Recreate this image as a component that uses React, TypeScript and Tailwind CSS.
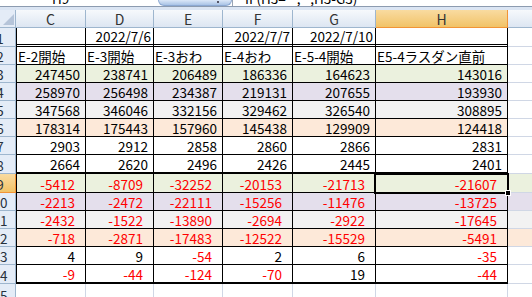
import React from "react";

type Row = {
  n: number;
  h: string;
  bg: string;
  cells: string[];
  kind: "date" | "label" | "num" | "diff" | "empty";
  bottom?: "double" | "thick";
  fillI?: boolean;
  selected?: boolean;
};

// column widths (incl. borders): C has its own left border
const colW = ["w-[70px]", "w-[68px]", "w-[69px]", "w-[70px]", "w-[83px]", "w-[132px]"];
const colNames = ["C", "D", "E", "F", "G", "H"];

const rows: Row[] = [
  { n: 1, h: "h-[19px]", bg: "bg-white", kind: "date", bottom: "double", cells: ["", "2022/7/6", "", "2022/7/7", "2022/7/10", ""] },
  { n: 2, h: "h-[18px]", bg: "bg-white", kind: "label", cells: ["E-2開始", "E-3開始", "E-3おわ", "E-4おわ", "E-5-4開始", "E5-4ラスダン直前"] },
  { n: 3, h: "h-[18px]", bg: "bg-[#ebf1de]", kind: "num", cells: ["247450", "238741", "206489", "186336", "164623", "143016"] },
  { n: 4, h: "h-[18px]", bg: "bg-[#e4dfec]", kind: "num", cells: ["258970", "256498", "234387", "219131", "207655", "193930"] },
  { n: 5, h: "h-[18px]", bg: "bg-[#f2f2f2]", kind: "num", cells: ["347568", "346046", "332156", "329462", "326540", "308895"] },
  { n: 6, h: "h-[18px]", bg: "bg-[#fde9d9]", kind: "num", cells: ["178314", "175443", "157960", "145438", "129909", "124418"] },
  { n: 7, h: "h-[18px]", bg: "bg-white", kind: "num", cells: ["2903", "2912", "2858", "2860", "2866", "2831"] },
  { n: 8, h: "h-[19px]", bg: "bg-white", kind: "num", bottom: "thick", cells: ["2664", "2620", "2496", "2426", "2445", "2401"] },
  { n: 9, h: "h-[19px]", bg: "bg-[#ebf1de]", kind: "diff", fillI: true, selected: true, cells: ["-5412", "-8709", "-32252", "-20153", "-21713", "-21607"] },
  { n: 10, h: "h-[18px]", bg: "bg-[#e4dfec]", kind: "diff", fillI: true, cells: ["-2213", "-2472", "-22111", "-15256", "-11476", "-13725"] },
  { n: 11, h: "h-[18px]", bg: "bg-[#f2f2f2]", kind: "diff", fillI: true, cells: ["-2432", "-1522", "-13890", "-2694", "-2922", "-17645"] },
  { n: 12, h: "h-[18px]", bg: "bg-[#fde9d9]", kind: "diff", fillI: true, cells: ["-718", "-2871", "-17483", "-12522", "-15529", "-5491"] },
  { n: 13, h: "h-[18px]", bg: "bg-white", kind: "diff", cells: ["4", "9", "-54", "2", "6", "-35"] },
  { n: 14, h: "h-[19px]", bg: "bg-white", kind: "diff", bottom: "thick", cells: ["-9", "-44", "-124", "-70", "19", "-44"] },
];

function RowHeader({ n, selected, h }: { n: number; selected?: boolean; h: string }) {
  return (
    <div
      className={`${h} w-[16px] shrink-0 overflow-hidden border-r border-b ${
        selected
          ? "bg-gradient-to-b from-[#f9dba0] to-[#f1c366] border-r-[#f29436] border-b-[#f29436]"
          : "bg-[#e4ecf7] border-r-[#9eb6ce] border-b-[#9eb6ce]"
      }`}
    >
      <div className="-ml-[15px] w-[30px] h-full flex items-end justify-center text-[13.5px] leading-[15px] text-[#27313d]">
        {n}
      </div>
    </div>
  );
}

function Cell({ row, i }: { row: Row; i: number }) {
  const v = row.cells[i];
  const red = v.startsWith("-");
  const border =
    row.bottom === "double"
      ? "border-b-[3px] border-double"
      : row.bottom === "thick"
      ? "border-b-2"
      : "border-b";
  const align =
    row.kind === "label"
      ? "justify-start pl-[1px]"
      : row.kind === "diff"
      ? "justify-end pr-[10px]"
      : row.kind === "date"
      ? "justify-end pr-[2px]"
      : "justify-end pr-[5px]";
  return (
    <div
      className={`${colW[i]} h-full shrink-0 flex items-end ${align} ${border} border-r border-black ${
        i === 0 ? "border-l" : ""
      } ${row.bg} ${red ? "text-[#ff0000]" : "text-black"} whitespace-nowrap overflow-hidden`}
    >
      <span className="leading-[16px]">{v}</span>
    </div>
  );
}

export default function App() {
  return (
    <div className="w-[532px] h-[297px] overflow-hidden bg-white relative font-['Noto_Sans_CJK_JP',sans-serif] text-[13.5px]">
      {/* formula bar remnant */}
      <div className="h-[7px] border-b border-[#8c9bb0] relative overflow-hidden bg-white">
        <span className="absolute left-[52px] -top-[9px] text-[13.5px] leading-[14px] text-black">H9</span>
        <div className="absolute left-[158px] top-0 w-[74px] h-[6px] rounded-b-[8px] bg-gradient-to-b from-[#dbe7f7] to-[#a9c3e6] border border-t-0 border-[#8da9d2]">
          <div className="absolute right-[12px] top-[1px] w-[2px] h-[2px] bg-[#556]" />
        </div>
        <div className="absolute left-[232px] top-0 h-full border-l border-[#9aa5b5]" />
        <span className="absolute left-[245px] -top-[9px] text-[13.5px] leading-[14px] text-black whitespace-nowrap">
          IF(H3="","",H3-G3)
        </span>
      </div>
      <div className="h-[3px] bg-[#dbe5f3]" />

      {/* column headers */}
      <div className="flex h-[18px]">
        <div className="w-[16px] shrink-0 h-full bg-[#e4ecf7] border-r border-b border-[#9eb6ce] relative">
          <svg className="absolute left-[3px] top-[4px]" width="11" height="11" viewBox="0 0 11 11">
            <polygon points="11,0 11,11 0,11" fill="#b5c4d9" />
          </svg>
        </div>
        {colNames.map((c, i) => (
          <div
            key={c}
            className={`${i === 0 ? "w-[70px]" : colW[i]} shrink-0 h-full flex items-center justify-center border-r border-b text-[14px] leading-none ${
              c === "H"
                ? "bg-gradient-to-b from-[#f9dba0] to-[#f1c366] border-[#f29436] text-[#333]"
                : "bg-gradient-to-b from-[#f6f9fc] to-[#dde6f2] border-[#9eb6ce] text-[#333]"
            }`}
          >
            {c}
          </div>
        ))}
        <div className="flex-1 h-full bg-gradient-to-b from-[#f6f9fc] to-[#dde6f2] border-b border-[#9eb6ce]" />
      </div>

      {/* body rows */}
      {rows.map((r) => (
        <div key={r.n} className={`flex ${r.h}`}>
          <RowHeader n={r.n} selected={r.selected} h={r.h} />
          {r.cells.map((_, i) => (
            <Cell key={i} row={r} i={i} />
          ))}
          <div
            className={`flex-1 h-full border-b ${
              r.bottom === "thick" ? "border-[#d0d7e5]" : "border-[#d0d7e5]"
            } ${r.fillI ? r.bg : "bg-white"}`}
          />
        </div>
      ))}

      {/* empty row 15 */}
      <div className="flex h-[20px]">
        <RowHeader n={15} h="h-[20px]" />
        {colW.map((w, i) => (
          <div key={i} className={`${w} h-full shrink-0 border-r border-[#d0d7e5] ${i === 0 ? "border-l border-l-white" : ""}`} />
        ))}
        <div className="flex-1" />
      </div>

      {/* active cell H9 */}
      <div className="absolute left-[374px] top-[173px] w-[135px] h-[21px] border-2 border-black pointer-events-none" />
      <div className="absolute left-[505px] top-[190px] w-[6px] h-[6px] bg-black border border-white" />
    </div>
  );
}
